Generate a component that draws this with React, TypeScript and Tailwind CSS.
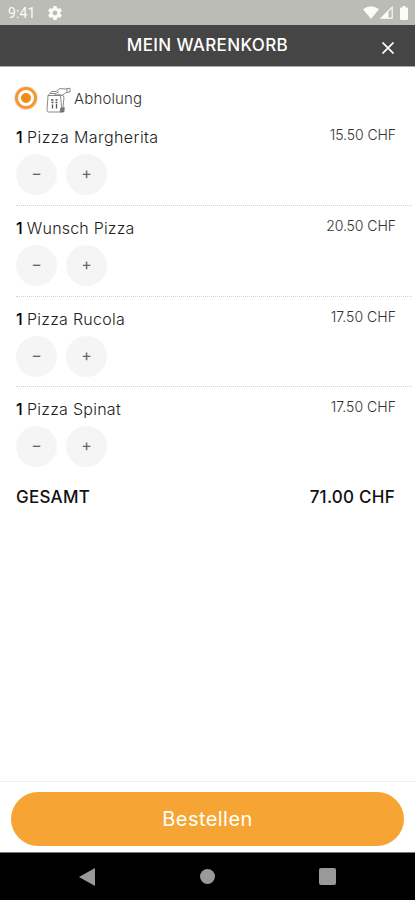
type CartItem = {
  id: number
  quantity: number
  name: string
  price: string
  nameClass: string
  priceClass: string
}

const items: CartItem[] = [
  { id: 1, quantity: 1, name: 'Pizza Margherita', price: '15.50 CHF', nameClass: 'tracking-[0.42px]', priceClass: 'tracking-[-0.08px]' },
  { id: 2, quantity: 1, name: 'Wunsch Pizza', price: '20.50 CHF', nameClass: 'tracking-[0.2px]', priceClass: 'tracking-[-0.05px]' },
  { id: 3, quantity: 1, name: 'Pizza Rucola', price: '17.50 CHF', nameClass: 'tracking-[0.26px]', priceClass: 'tracking-[0.03px]' },
  { id: 4, quantity: 1, name: 'Pizza Spinat', price: '17.50 CHF', nameClass: 'tracking-[0.26px]', priceClass: 'tracking-[0.03px]' },
]

function StatusBar() {
  return (
    <div className="flex h-[25px] shrink-0 items-center justify-between bg-[#bbbcb5] pl-2 pr-[7px] text-[#fbfbf7]">
      <div className="flex items-center gap-3">
        <span className="w-7 font-[Roboto,sans-serif] text-sm leading-none tracking-[0.1px]">9:41</span>
        <svg width="14" height="14" viewBox="2 2 20 20" fill="currentColor">
          <path d="M19.43 12.98c.04-.32.07-.64.07-.98s-.03-.66-.07-.98l2.11-1.65c.19-.15.24-.42.12-.64l-2-3.46c-.12-.22-.39-.3-.61-.22l-2.49 1c-.52-.4-1.08-.73-1.69-.98l-.38-2.65A.49.49 0 0 0 14 2h-4c-.25 0-.46.18-.49.42l-.38 2.65c-.61.25-1.17.59-1.69.98l-2.49-1c-.23-.09-.49 0-.61.22l-2 3.46c-.13.22-.07.49.12.64l2.11 1.65c-.04.32-.07.65-.07.98s.03.66.07.98l-2.11 1.65c-.19.15-.24.42-.12.64l2 3.46c.12.22.39.3.61.22l2.49-1c.52.4 1.08.73 1.69.98l.38 2.65c.03.24.24.42.49.42h4c.25 0 .46-.18.49-.42l.38-2.65c.61-.25 1.17-.59 1.69-.98l2.49 1c.23.09.49 0 .61-.22l2-3.46c.12-.22.07-.49-.12-.64l-2.11-1.65zM12 15.5a3.5 3.5 0 1 1 0-7 3.5 3.5 0 0 1 0 7z" />
        </svg>
      </div>
      <div className="flex items-center">
        <svg width="16" height="13" viewBox="0 0 16 13" fill="currentColor">
          <path d="M8 13 0 3.2Q8-2.8 16 3.2Z" />
        </svg>
        <svg className="ml-px" width="13" height="13" viewBox="0 0 13 13" fill="none">
          <path d="M12.2 1.2v11H1.2Z" stroke="currentColor" strokeWidth="1.2" />
          <path d="M8.5 4.8v7.4H1Z" fill="currentColor" />
        </svg>
        <svg className="ml-[7px]" width="8" height="14" viewBox="0 0 8 14" fill="currentColor">
          <path d="M2.5 0h3v1.5H7a1 1 0 0 1 1 1V13a1 1 0 0 1-1 1H1a1 1 0 0 1-1-1V2.5a1 1 0 0 1 1-1h1.500Z" />
        </svg>
      </div>
    </div>
  )
}

function PickupIcon() {
  return (
    <svg width="25" height="26" viewBox="0 0 25 26" fill="none" stroke="#6c6c6c" strokeWidth="0.8" strokeLinejoin="round">
      <path d="M2 8.5 1 23.5Q1 25 2.5 25H16.500L18 10 16 7.500" />
      <path d="M2 8.5 4 6.5H9M2 8.5H14.500L16 25M4 6.500 5.500 4.500H10" />
      <path d="M10 4.5 14 1.5 19 2 24 1.200V5L20 5.500 16 8.500 12.500 7.500 9.500 8.500 9 7 13 4.800" />
      <path d="M21 1.7V5.2" />
      <path d="M5 13H7.500M9.500 13H11.500M5.500 15.500H7.500M9.500 15.500H11.500M6.500 17.500V21.500M10.500 17V21.500" stroke="#555" strokeWidth="1.3" />
      <path d="M14.500 21 14 25H18L18.500 20.500Z" fill="#777" strokeWidth="0.500" />
    </svg>
  )
}

function QuantityButton({ label }: { label: string }) {
  return (
    <button className="flex size-[41px] items-center justify-center rounded-full bg-[#f5f5f5] pb-[3px] text-base leading-none text-[#666]">
      {label}
    </button>
  )
}

function CartRow({ item, last }: { item: CartItem; last: boolean }) {
  return (
    <li className={`ml-4 mr-[3px] h-[90.7px] border-b pt-3 ${last ? 'border-transparent' : 'border-dotted border-[#d2d2d2]'}`}>
      <div className="flex h-5 items-center justify-between pr-4">
        <p className={`whitespace-nowrap text-base leading-5 font-light text-[#222] ${item.nameClass}`}>
          <span className="mr-1 font-medium text-black">{item.quantity}</span>
          {item.name}
        </p>
        <span className={`-mt-1 whitespace-nowrap text-sm font-light text-[#333] ${item.priceClass}`}>{item.price}</span>
      </div>
      <div className="mt-[7px] flex gap-[9px]">
        <QuantityButton label="−" />
        <QuantityButton label="+" />
      </div>
    </li>
  )
}

export default function App() {
  return (
    <div className="flex h-[900px] w-[415px] flex-col overflow-hidden bg-white font-[Inter,sans-serif]">
      <StatusBar />

      <header className="flex h-[42px] shrink-0 items-center border-b border-[#aaa] bg-[#454545] text-white">
        <span className="w-[54px]" />
        <h1 className="flex-1 pt-px text-center text-[17px] font-medium tracking-[0.36px] whitespace-nowrap">MEIN WARENKORB</h1>
        <button className="flex w-[54px] justify-center pt-[5px]">
          <svg width="12" height="12" viewBox="0 0 12 12" stroke="currentColor" strokeWidth="1.7">
            <path d="M0.5 0.5 11.5 11.5M11.5 0.5 0.5 11.5" />
          </svg>
        </button>
      </header>

      <main className="flex-1">
        <div className="flex h-[48.3px] items-center pt-3.5 pl-[15px]">
          <span className="flex size-[22px] items-center justify-center rounded-full border-[3px] border-[#f29a31] bg-white ring-1 ring-[#fde0d2]">
            <span className="size-2.5 rounded-full bg-[#ee8d17]" />
          </span>
          <span className="ml-[9px] pt-[3px]">
            <PickupIcon />
          </span>
          <span className="ml-[3px] pt-0.5 text-[15px] font-light tracking-[0.15px] text-[#333]">Abholung</span>
        </div>

        <ul>
          {items.map((item, index) => (
            <CartRow key={item.id} item={item} last={index === items.length - 1} />
          ))}
        </ul>

        <div className="flex h-10 items-center justify-between pr-5 pl-4 text-[17px] font-medium tracking-[0.25px] text-[#111]">
          <span>GESAMT</span>
          <span>71.00 CHF</span>
        </div>
      </main>

      <footer className="h-[71px] shrink-0 border-t border-[#eee] px-[11px] pt-2.5">
        <button className="h-[54px] w-full rounded-full bg-[#f6a535] text-xl tracking-[0.45px] text-white">Bestellen</button>
      </footer>

      <nav className="flex h-12 shrink-0 items-center justify-between border-t border-[#777] bg-black px-[79px]">
        <svg width="16" height="18" viewBox="0 0 16 18" fill="#999">
          <path d="M0 9 16 0V18Z" />
        </svg>
        <span className="size-[15px] rounded-full bg-[#999]" />
        <span className="size-[17px] rounded-[2px] bg-[#999]" />
      </nav>
    </div>
  )
}
